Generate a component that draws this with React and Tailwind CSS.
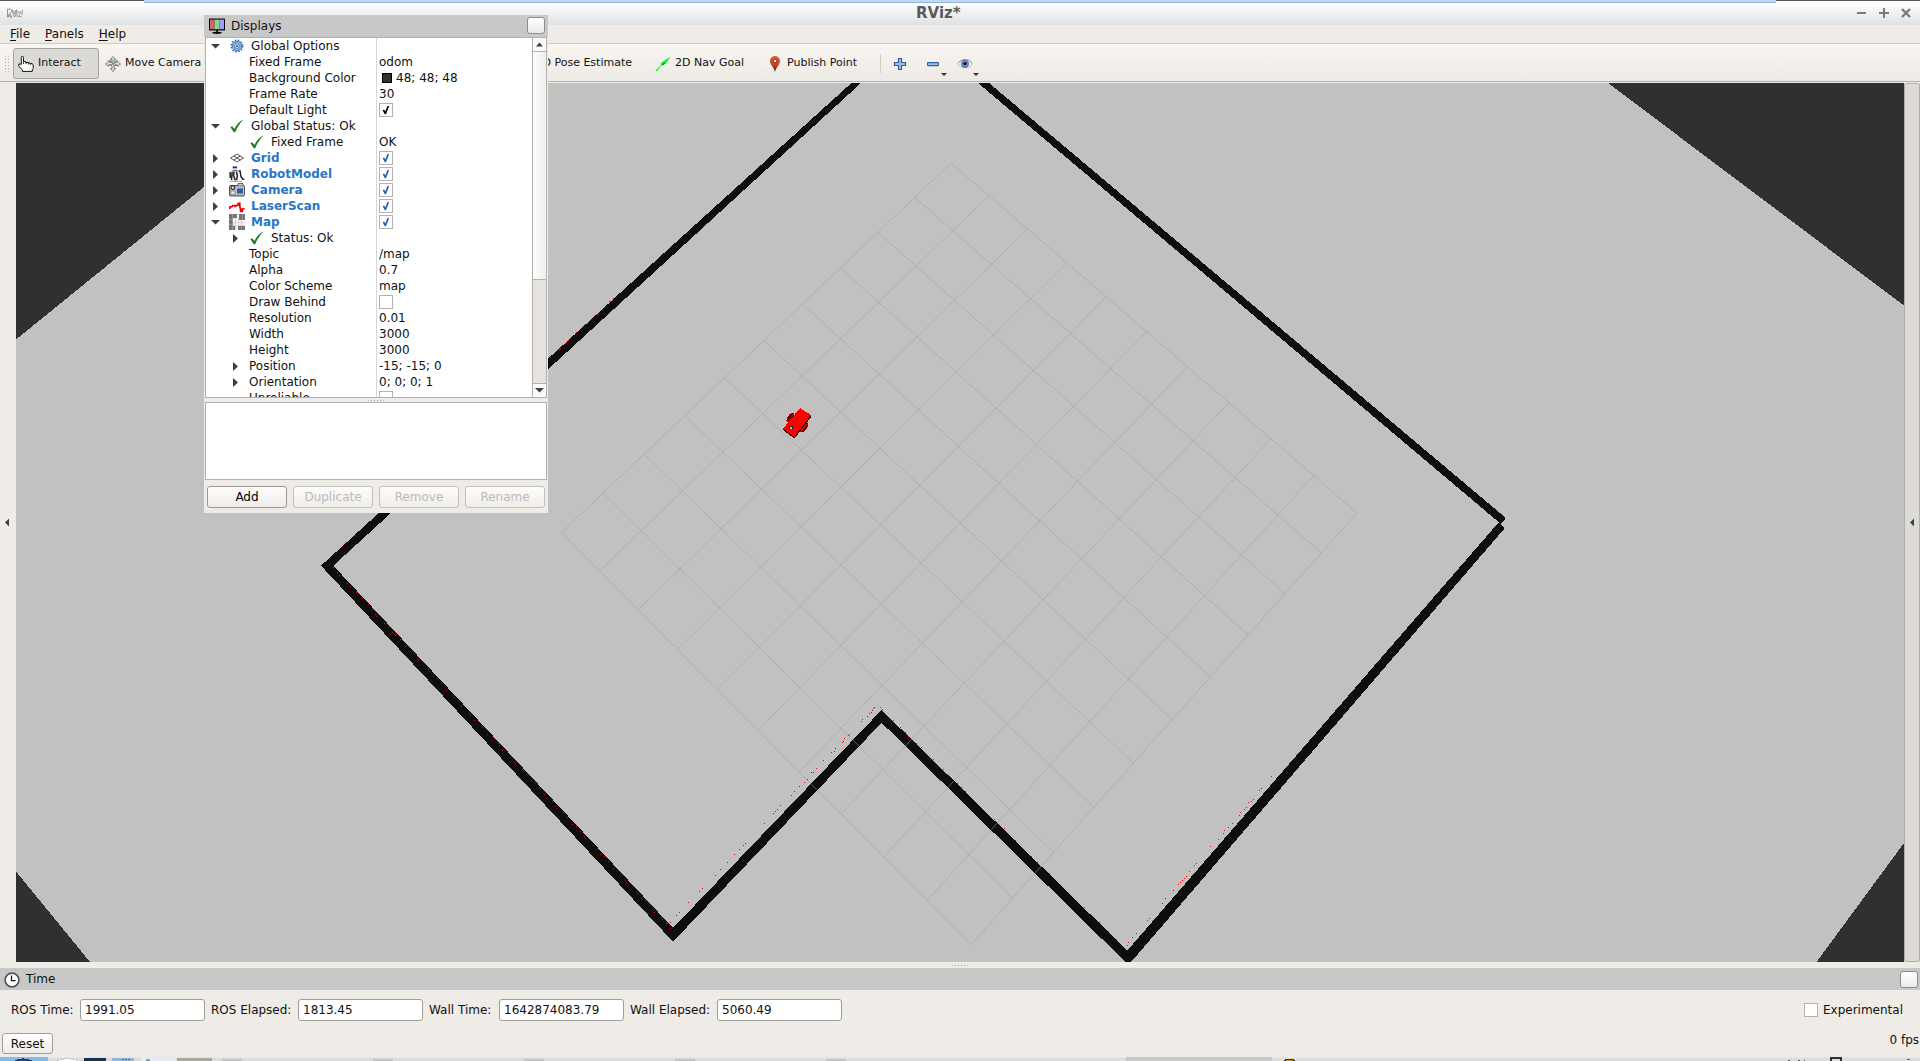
import React from "react";

/* ---------- 3D viewport geometry ---------- */

const GRID_CORNERS = [
  [951, 163],
  [1357, 513],
  [971, 944.7],
  [561.3, 532.7],
];

function project(u, v) {
  const [[x0, y0], [x1, y1], [x2, y2], [x3, y3]] = GRID_CORNERS;
  const dx1 = x1 - x2, dx2 = x3 - x2, sx = x0 - x1 + x2 - x3;
  const dy1 = y1 - y2, dy2 = y3 - y2, sy = y0 - y1 + y2 - y3;
  const den = dx1 * dy2 - dx2 * dy1;
  const g = (sx * dy2 - dx2 * sy) / den;
  const h = (dx1 * sy - sx * dy1) / den;
  const w = g * u + h * v + 1;
  return [
    ((x1 - x0 + g * x1) * u + (x3 - x0 + h * x3) * v + x0) / w,
    ((y1 - y0 + g * y1) * u + (y3 - y0 + h * y3) * v + y0) / w,
  ];
}

const GRID_LINES = Array.from({ length: 11 }, (_, i) => i / 10).flatMap((t) => [
  [project(t, 0), project(t, 1)],
  [project(0, t), project(1, t)],
]);

const HITS_LOWER = [
  [874, 707], [873, 708], [872, 710], [871, 712], [869, 713], [867, 716], [862, 719], [861, 721], [880, 707],
  [849, 734], [848, 735], [844, 738], [843, 741], [842, 742], [835, 748], [834, 751], [831, 752], [823, 760],
  [816, 768], [813, 772], [811, 772], [807, 779], [804, 782], [799, 786], [794, 791], [791, 795], [780, 805],
  [777, 809], [775, 811], [773, 813], [764, 823], [745, 843], [743, 845], [739, 849], [734, 854], [727, 862],
  [720, 869], [715, 875], [702, 888], [699, 891], [688, 902], [679, 912], [676, 915], [670, 922], [667, 923],
  [882, 709], [893, 720], [900, 727], [905, 732], [908, 736], [916, 743], [921, 747], [933, 759], [943, 769],
  [947, 774], [957, 783], [961, 787], [965, 791], [994, 819], [1004, 828], [1015, 840], [1031, 856],
  [1037, 862], [1049, 873], [1084, 907], [1099, 922], [1108, 931], [1116, 939],
];

const HITS_RIGHT = [
  [1271, 776], [1261, 788], [1259, 790], [1253, 799], [1251, 801], [1248, 802], [1246, 807], [1244, 809],
  [1240, 812], [1239, 815], [1232, 823], [1228, 827], [1224, 830], [1223, 833], [1218, 839], [1210, 846],
  [1196, 863], [1194, 865], [1189, 871], [1186, 876], [1184, 878], [1182, 880], [1180, 882], [1178, 884],
  [1173, 890], [1165, 898], [1162, 903], [1149, 918], [1147, 920], [1136, 933], [1132, 937], [1128, 942],
  [1127, 945],
];

const HITS_LEFT = [
  [613, 298], [612, 300], [610, 301], [609, 301], [604, 307], [602, 309], [597, 314], [596, 314], [587, 323],
  [576, 332], [575, 333], [568, 340], [566, 342], [565, 343], [560, 348], [559, 349], [550, 357], [378, 513],
  [371, 520], [354, 535], [342, 546], [329, 558], [329, 564], [333, 567], [337, 572], [339, 575],
  [347, 583], [350, 586], [356, 592], [362, 598],
];

const HITS_WALL = Array.from({ length: 88 }, (_, i) => {
  const y = 604 + i * 3.7 + ((i * 7) % 5) * 0.6;
  const x = 333 + ((y - 565.7) * 339.7) / 362.3;
  return [x - 1 - ((i * 5) % 4) * 0.8, y];
}).filter((_, i) => i % 6 !== 4);

const HITS = [...HITS_LOWER, ...HITS_RIGHT, ...HITS_LEFT, ...HITS_WALL];

function Viewport() {
  return (
    <svg className="block h-[879px] w-[1888px]" viewBox="16 83 1888 879" shapeRendering="crispEdges">
      <rect x="16" y="83" width="1888" height="879" fill="#c1c1c1" />
      <g fill="#303030">
        <polygon points="16,83 330,83 204,187 16,339.5" />
        <polygon points="1608,83 1904,83 1904,305.5" />
        <polygon points="1904,843 1904,962 1816.5,962" />
        <polygon points="16,871.5 90,962 16,962" />
      </g>
      <g fill="#0e0e0e">
        <polygon points="851.4,83 634.3,280 321,565.7 673,941.7 881.6,722.7 1128.5,965 1504.9,528 1500.8,524 1505.9,518 989,83 978,83 1498.8,522.2 1127.3,950.5 881.6,710 673,928 333.3,565.7 645.7,280 861,83" />
      </g>
      <g stroke="rgb(160 160 164 / 0.55)" strokeWidth="1" shapeRendering="auto">
        {GRID_LINES.map(([a, b], i) => (
          <line key={i} x1={a[0]} y1={a[1]} x2={b[0]} y2={b[1]} />
        ))}
      </g>
      <g fill="#ff0000">
        {HITS.map(([x, y], i) => (
          <rect key={i} x={Math.round(x)} y={Math.round(y)} width="1" height="1" />
        ))}
      </g>
      <g>
        <ellipse cx="790.5" cy="417.5" rx="5.5" ry="2.8" transform="rotate(-52 790.5 417.5)" fill="#b40000" />
        <path d="M787 420l6-7M789 421l4-5" stroke="#300" />
        <ellipse cx="803.5" cy="427" rx="6" ry="3.6" transform="rotate(-52 803.5 427)" fill="#5a0000" />
        <path d="M800 432l7-8" stroke="#d00000" strokeWidth="2" />
        <polygon points="800,408 811,415.3 811,417 794.5,438.5 783,430" fill="#200" />
        <polygon points="800,408 811,415 794.3,437 783,428.6" fill="#ff0000" />
        <rect x="789" y="426" width="4" height="3" fill="#222" />
        <rect x="790" y="427" width="2" height="2" fill="#bbb" />
      </g>
    </svg>
  );
}

/* ---------- Icons ---------- */

const svgBase = { width: 16, height: 16, viewBox: "0 0 16 16", className: "block shrink-0" };

const HandIcon = () => (
  <svg {...svgBase}>
    <path
      d="M3.3 8.5V1.4a1 1 0 0 1 2.2 0V5.6h2.2v.8h2.2v.6h2.3v.6h1.8l1.2 1v4l-.9 1.2v1.6H4.4v-1.5L.8 10.4V8h1.4z"
      fill="#fff" stroke="#111" strokeWidth="1"
    />
    <path d="M5.5 5.5v2.5M8 6v2M10.3 6.6V8.5M12.4 7.4V9" stroke="#111" strokeWidth="0.8" />
  </svg>
);

const MoveIcon = () => (
  <svg {...svgBase} fill="#e4e2de" stroke="#555" strokeWidth="0.7">
    <path d="M8 .5L10.6 3.4H9V6.2l1.6 0 0-1.4h2V6l3 2-3 2.2V9h-2V8.6L9 10v2.6h1.6L8 15.5l-2.6-2.9H7V10L5.4 8.7V9h-2v1.2L.5 8l2.9-2v-1.2h2V6.2H7V3.4H5.4z" />
    <path d="M4 6h3.2L9 9.5h3M4.5 9.5L12 6" fill="none" />
  </svg>
);

const NavIcon = () => (
  <svg {...svgBase}>
    <path d="M.3 14.8L6 9l-.5-1.5L8.5 5 15.7.8 11 7.2 8 9.3 6.7 9.2 2 15.3z" fill="#14f52c" />
    <path d="M6.5 8.5l3-2 1 .7-2.5 2z" fill="#0a9a1a" />
  </svg>
);

const PinIcon = () => (
  <svg {...svgBase}>
    <defs>
      <linearGradient id="pin" x1="0" y1="0" x2="0" y2="1">
        <stop offset="0" stopColor="#ef5c38" />
        <stop offset="0.6" stopColor="#b4431f" />
        <stop offset="1" stopColor="#4a1a08" />
      </linearGradient>
    </defs>
    <path d="M8 16C7.2 11.5 3 8.8 3 5a5 5 0 0 1 10 0c0 3.8-4.2 6.5-5 11z" fill="url(#pin)" />
    <circle cx="8" cy="5" r="1.8" fill="#f4e4dc" stroke="#7e2c12" strokeWidth="0.8" />
  </svg>
);

const PlusIcon = () => (
  <svg {...svgBase}>
    <path d="M6.5 2.5h3v4h4v3h-4v4h-3v-4h-4v-3h4z" fill="#9dbde6" stroke="#2f62a8" strokeWidth="1.2" />
  </svg>
);

const MinusIcon = () => (
  <svg {...svgBase}>
    <rect x="2.5" y="6.6" width="11" height="3" rx="0.5" fill="#9dbde6" stroke="#2f62a8" strokeWidth="1.1" />
  </svg>
);

const EyeIcon = () => (
  <svg {...svgBase}>
    <path d="M.5 8C4 2.2 12 2.2 15.5 8 12 13 4 13 .5 8z" fill="#f2f2f2" stroke="#b8b8b8" strokeWidth="1" />
    <path d="M1 7C4.5 2.4 11.5 2.4 15 7" fill="none" stroke="#9a9a9a" strokeWidth="1" />
    <circle cx="8" cy="7.8" r="3.6" fill="#6f8fc9" stroke="#46619b" strokeWidth="0.8" />
    <circle cx="8" cy="7.6" r="1.7" fill="#10142a" />
  </svg>
);

const MonitorIcon = () => (
  <svg {...svgBase}>
    <rect x="0" y="0.5" width="16" height="12" rx="0.5" fill="#0a0a0a" />
    <rect x="1" y="1.6" width="4.6" height="9.6" fill="#c46a6a" />
    <rect x="5.6" y="1.6" width="4.8" height="9.6" fill="#8ad68a" />
    <rect x="10.4" y="1.6" width="4.6" height="9.6" fill="#a0a0f2" />
    <rect x="7" y="12.2" width="2" height="1.6" fill="#0a0a0a" />
    <ellipse cx="8" cy="14.8" rx="4.8" ry="1.1" fill="#0a0a0a" />
  </svg>
);

const GearIcon = () => (
  <svg {...svgBase}>
    <circle cx="8" cy="8" r="5.7" fill="none" stroke="#2f66ae" strokeWidth="1.6" strokeDasharray="1.5 1.5" />
    <circle cx="8" cy="8" r="4.7" fill="#8fb4e2" stroke="#3f77bf" strokeWidth="1" />
    <circle cx="8" cy="8" r="2.4" fill="#c5d9f2" stroke="#3f77bf" strokeWidth="0.8" />
    <circle cx="8" cy="8" r="1" fill="#2f66ae" />
  </svg>
);

const CheckIcon = () => (
  <svg {...svgBase}>
    <path d="M1.4 9.2l1.8-1 2.1 2.8C7.6 6.6 10.4 3.4 14.6 1.2 10.6 5.4 8.4 9 6.2 14.2H4.8z" fill="#1c7c22" />
  </svg>
);

const GridIcon = () => (
  <svg {...svgBase} fill="none" stroke="#444" strokeWidth="0.9">
    <path d="M1.5 8L8 4l6.5 4L8 12zM4.7 6l6.6 4M11.3 6L4.7 10" />
  </svg>
);

const RobotIcon = () => (
  <svg {...svgBase}>
    <path d="M3.5.6h4l.8 1.4-1 1H4.3L3 1.8z" fill="#f0f0f0" stroke="#889" strokeWidth="0.5" />
    <rect x="4" y="0.6" width="4" height="1.6" fill="#1a2fa0" />
    <path d="M1.2 6v6M3.2 5.5L2.6 14M5 5.5l-.4 4 1.8 5M7.4 5.5l1 4.5-.8 4M9.5 5h1.6l.8 5.5 2 2.8h1.4" fill="none" stroke="#222" strokeWidth="1.5" />
    <path d="M3.6 4.6h5" stroke="#555" />
    <path d="M1 15.3h12" stroke="#999" />
  </svg>
);

const CameraIcon = () => (
  <svg {...svgBase}>
    <rect x="0.5" y="3.5" width="15" height="10.5" rx="1" fill="#a9a9a9" stroke="#555" />
    <path d="M9 3.5V1.5h5v2" fill="#ccc" stroke="#666" />
    <circle cx="3.8" cy="5.6" r="1.8" fill="#ddd" stroke="#111" strokeWidth="1" />
    <rect x="7.5" y="6" width="7" height="6" fill="#2b5aa8" stroke="#ddd" strokeWidth="0.8" />
    <rect x="2" y="9" width="4" height="3.4" fill="#e6e6e6" stroke="#777" strokeWidth="0.5" />
  </svg>
);

const LaserIcon = () => (
  <svg {...svgBase}>
    <path d="M.8 11V9l2-.4 1-1h2.4l.4 1.6M6.8 7.6l2.4-.6V5.4h1.6v3l.8 3.4v1.6h1.6v-2.4l2.4-.2" fill="none" stroke="#f00000" strokeWidth="1.7" />
  </svg>
);

const MapIcon = () => (
  <svg {...svgBase} shapeRendering="crispEdges">
    <rect width="16" height="16" fill="#f6f6f6" />
    <path d="M6 4v12M9 4v12M12 6v6M4 8h12M4 11h12" stroke="#d4d4d4" strokeWidth="1" fill="none" />
    <path d="M0 0h8v4H4v8h2v4H0zM10 0h6v6h-6zM9 12h7v4H9z" fill="#757575" />
    <path d="M3 0v16M13 0v6M0 5h4M0 10h4M12 12v4" stroke="#959595" strokeWidth="1" fill="none" />
  </svg>
);

const ClockIcon = () => (
  <svg {...svgBase}>
    <circle cx="8" cy="8" r="6.9" fill="#fff" stroke="#555" strokeWidth="1.7" />
    <path d="M7.5 3.6v5h4" fill="none" stroke="#111" strokeWidth="1.2" />
  </svg>
);

const ICONS = {
  gear: GearIcon,
  check: CheckIcon,
  grid: GridIcon,
  robot: RobotIcon,
  camera: CameraIcon,
  laser: LaserIcon,
  map: MapIcon,
};

function Triangle({ dir }) {
  const d = {
    down: "M0 2h9L4.5 6.6z",
    right: "M2 0v9l5-4.5z",
    up: "M1 6.5h7L4.5 2.5z",
    left: "M6 .5v8L2 4.5z",
  }[dir];
  return (
    <svg width="9" height="9" viewBox="0 0 9 9" className="block shrink-0">
      <path d={d} fill="#3f3f3f" />
    </svg>
  );
}

/* ---------- Displays tree ---------- */

const ROWS = [
  { level: 0, arrow: "down", icon: "gear", name: "Global Options" },
  { level: 1, name: "Fixed Frame", value: "odom" },
  { level: 1, name: "Background Color", value: "48; 48; 48", swatch: true },
  { level: 1, name: "Frame Rate", value: "30" },
  { level: 1, name: "Default Light", check: "black" },
  { level: 0, arrow: "down", icon: "check", name: "Global Status: Ok" },
  { level: 1, icon: "check", name: "Fixed Frame", value: "OK" },
  { level: 0, arrow: "right", icon: "grid", name: "Grid", bold: true, check: "blue" },
  { level: 0, arrow: "right", icon: "robot", name: "RobotModel", bold: true, check: "blue" },
  { level: 0, arrow: "right", icon: "camera", name: "Camera", bold: true, check: "blue" },
  { level: 0, arrow: "right", icon: "laser", name: "LaserScan", bold: true, check: "blue" },
  { level: 0, arrow: "down", icon: "map", name: "Map", bold: true, check: "blue" },
  { level: 1, arrow: "right", icon: "check", name: "Status: Ok" },
  { level: 1, name: "Topic", value: "/map" },
  { level: 1, name: "Alpha", value: "0.7" },
  { level: 1, name: "Color Scheme", value: "map" },
  { level: 1, name: "Draw Behind", check: "none" },
  { level: 1, name: "Resolution", value: "0.01" },
  { level: 1, name: "Width", value: "3000" },
  { level: 1, name: "Height", value: "3000" },
  { level: 1, arrow: "right", name: "Position", value: "-15; -15; 0" },
  { level: 1, arrow: "right", name: "Orientation", value: "0; 0; 0; 1" },
  { level: 1, name: "Unreliable", check: "none" },
];

function CheckBox({ state }) {
  return (
    <span className="flex h-3.5 w-3.5 shrink-0 items-center justify-center border border-[#b4b1ae] bg-white">
      {state !== "none" && (
        <svg width="10" height="10" viewBox="0 0 10 10">
          <path
            d="M1.6 5.2l1.6-.6 1 1.8L6.4 1.2 8.3.8 5 9.2H3.8z"
            fill={state === "blue" ? "#1f5fa6" : "#000"}
          />
        </svg>
      )}
    </span>
  );
}

function TreeRow({ row }) {
  const Icon = row.icon && ICONS[row.icon];
  return (
    <div className="flex h-4 shrink-0 leading-4">
      <div className={`flex w-[171px] shrink-0 items-center border-r border-[#d6d6d6] ${row.level === 1 ? "pl-[25px]" : "pl-[5px]"}`}>
        <span className="w-[18px] shrink-0">{row.arrow && <Triangle dir={row.arrow} />}</span>
        {Icon && (
          <span className="mr-1.5 shrink-0">
            <Icon />
          </span>
        )}
        <span className={row.bold ? "font-bold text-[#2a76c6]" : ""}>{row.name}</span>
      </div>
      <div className="flex items-center pl-0.5">
        {row.swatch && <span className="mr-1 ml-[3px] h-2.5 w-2.5 border border-black bg-[#303030]" />}
        {row.check && <CheckBox state={row.check} />}
        {row.value}
      </div>
    </div>
  );
}

function Dots() {
  return (
    <div className="flex gap-0.5">
      {[0, 1, 2, 3, 4, 5].map((i) => (
        <span key={i} className="h-px w-px bg-[#a9a5a1]" />
      ))}
    </div>
  );
}

function FloatButton() {
  return (
    <span className="h-[17px] w-[18px] rounded-[3px] border border-[#8f8c89] bg-linear-to-b from-white to-[#ebebe9]" />
  );
}

function DisplaysPanel() {
  return (
    <section className="absolute top-[15px] left-[204px] flex h-[498px] w-[344px] flex-col bg-[#efebe7] px-px">
      <div className="-mx-px flex h-[22px] shrink-0 items-center bg-[#c8c8c8] pr-[3px] pb-px pl-[5px]">
        <MonitorIcon />
        <span className="ml-1.5 flex-1">Displays</span>
        <FloatButton />
      </div>
      <div className="flex h-[361px] shrink-0 border border-[#b3afab] bg-white">
        <div className="flex flex-1 flex-col overflow-hidden">
          {ROWS.map((row, i) => (
            <TreeRow key={i} row={row} />
          ))}
        </div>
        <div className="flex w-3.5 flex-col border-l border-[#b3afab] bg-[#e6e2df]">
          <div className="flex h-3.5 items-center justify-center border-b border-[#b3afab] bg-[#fafafa]">
            <Triangle dir="up" />
          </div>
          <div className="h-[228px] border-b border-[#b3afab] bg-linear-to-r from-white to-[#f0eeeb]" />
          <div className="flex-1" />
          <div className="flex h-3.5 items-center justify-center border-t border-[#b3afab] bg-[#fafafa]">
            <Triangle dir="down" />
          </div>
        </div>
      </div>
      <div className="flex h-1 shrink-0 items-center justify-center">
        <Dots />
      </div>
      <div className="h-[78px] shrink-0 border border-[#b3afab] bg-white" />
      <div className="mt-1.5 flex gap-1.5 px-0.5">
        {["Add", "Duplicate", "Remove", "Rename"].map((label, i) => (
          <button
            key={label}
            className={`h-[22px] w-20 rounded-[3px] border bg-linear-to-b from-[#fdfdfd] to-[#efedea] leading-5 ${
              i === 0 ? "border-[#9c9894] text-black" : "border-[#c4c1bd] text-[#bdbab7]"
            }`}
          >
            {label}
          </button>
        ))}
      </div>
    </section>
  );
}

/* ---------- Window chrome ---------- */

function WindowHeader() {
  return (
    <header className="shrink-0">
      <div className="flex h-[3px]">
        <div className="w-36 border-t border-[#555] bg-white" />
        <div className="w-[1632px] border-b border-[#8fb6e2] bg-[#c2d8f0]" />
        <div className="flex-1 border-t border-[#555] bg-white" />
      </div>
      <div className="flex h-[22px] items-center bg-linear-to-b from-white to-[#dfe2e2] pb-0.5">
        <svg width="18" height="10" viewBox="0 0 18 10" className="ml-1.5">
          <g fill="none" stroke="#8c8c8c" strokeWidth="0.9">
            <path d="M1.5 9V1.2h3q1.6.2 1.4 2T3.5 5.2L6 9.2H4.2L2.8 6v3z" />
            <path d="M6 1.5l2 7h1.2l1.6-7M7.5 3l1 3 1-4M11 3v6M12.2 4h2.5L12.6 8.6h3M16.5 2l-.7 5" />
          </g>
        </svg>
        <h1 className="ml-[892px] flex-1 text-[15px] leading-5 font-bold text-[#5a5a5a]">RViz*</h1>
        <svg width="54" height="12" viewBox="0 0 54 12" className="mr-[9px]" stroke="#7b7b7b" strokeWidth="2">
          <path d="M0 6h9M22 6h10M27 1v10" />
          <path d="M45 2l8 8M53 2l-8 8" strokeWidth="2.4" />
        </svg>
      </div>
    </header>
  );
}

function MenuBar() {
  return (
    <nav className="flex h-[19px] shrink-0 gap-[15px] border-b border-[#cfccc8] pl-2.5 leading-[18px]">
      {["File", "Panels", "Help"].map((m) => (
        <span key={m}>
          <u className="underline-offset-2">{m[0]}</u>
          {m.slice(1)}
        </span>
      ))}
    </nav>
  );
}

function DropTick() {
  return (
    <svg width="6" height="3" viewBox="0 0 6 3" className="mt-[22px] block">
      <path d="M0 0h6L3 3z" fill="#333" />
    </svg>
  );
}

function ToolBar() {
  return (
    <div className="flex h-[38px] shrink-0 items-center border-b border-[#b4b0a8] bg-linear-to-b from-[#f9f6f2] to-[#edeae5] pt-0.5 text-[11px]">
      <div className="ml-[5px] grid grid-cols-2 gap-0.5">
        {Array.from({ length: 12 }, (_, i) => (
          <span key={i} className="h-px w-px bg-[#b5b1ac]" />
        ))}
      </div>
      <div className="ml-1 flex h-[31px] w-[86px] items-center rounded-[3px] border border-[#a8a5a1] bg-[#dcdad6] pl-1">
        <HandIcon />
        <span className="ml-1">Interact</span>
      </div>
      <div className="ml-1.5 flex w-[527px] items-center">
        <MoveIcon />
        <span className="ml-1 flex-1">Move Camera</span>
        <span>2D Pose Estimate</span>
      </div>
      <div className="ml-[23px] flex w-28 items-center gap-1 whitespace-nowrap">
        <NavIcon />
        2D Nav Goal
      </div>
      <div className="flex items-center gap-1">
        <PinIcon />
        Publish Point
      </div>
      <div className="ml-[23px] h-[19px] w-px bg-[#cfccc8]" />
      <div className="ml-[11px]">
        <PlusIcon />
      </div>
      <div className="ml-[17px]">
        <MinusIcon />
      </div>
      <DropTick />
      <div className="ml-2.5">
        <EyeIcon />
      </div>
      <DropTick />
    </div>
  );
}

/* ---------- Time panel and desktop edge ---------- */

const TIMES = [
  ["ROS Time:", "1991.05", "w-[69px]"],
  ["ROS Elapsed:", "1813.45", "w-[87px]"],
  ["Wall Time:", "1642874083.79", "w-[70px]"],
  ["Wall Elapsed:", "5060.49", "w-[87px]"],
];

function TimePanel() {
  return (
    <section className="flex h-[89px] shrink-0 flex-col">
      <div className="flex h-[22px] items-center bg-[#c8c8c8] pt-px pr-0.5 pl-1">
        <ClockIcon />
        <span className="ml-1.5 flex-1 pb-px">Time</span>
        <FloatButton />
      </div>
      <div className="mt-[9px] flex h-[22px] items-center pl-[11px]">
        {TIMES.map(([label, value, width]) => (
          <div key={label} className="mr-1.5 flex items-center">
            <span className={`${width} whitespace-nowrap`}>{label}</span>
            <span className="h-[22px] w-[125px] rounded-[3px] border border-[#a19d99] bg-white pl-1 leading-5">{value}</span>
          </div>
        ))}
        <span className="flex-1" />
        <CheckBox state="none" />
        <span className="mr-[17px] ml-[5px]">Experimental</span>
      </div>
      <div className="mt-3 flex justify-between pr-px pl-0.5">
        <button className="h-[21px] w-[51px] rounded-[3px] border border-[#a19d99] bg-linear-to-b from-white to-[#efedea] pt-px leading-[19px]">
          Reset
        </button>
        <span className="leading-[15px]">0 fps</span>
      </div>
    </section>
  );
}

function Taskbar() {
  return (
    <svg className="block h-1 w-full shrink-0" viewBox="0 1057 1920 4" shapeRendering="crispEdges">
      <rect y="1057" width="1920" height="4" fill="#dcdcdc" />
      <rect y="1057" width="1920" height="1" fill="#e6e6e6" />
      <rect y="1057" width="48" height="4" fill="#7fbcf2" />
      <path d="M15 1061q8-4 17 0z" fill="#fff" stroke="#1f3f70" strokeWidth="1.2" />
      <path d="M57 1061l3-2h4l1-1h5l1 1h4l2 2z" fill="#fff" stroke="#aaa" strokeWidth="0.6" />
      <rect x="84" y="1058" width="22" height="3" fill="#16304f" />
      <rect x="112" y="1058" width="22" height="3" fill="#8fb8de" />
      <path d="M122 1059.5h9" stroke="#456f9e" strokeDasharray="2 1" />
      <rect x="141" y="1058" width="35" height="3" fill="#e4eef6" />
      <rect x="146" y="1059" width="4" height="2" fill="#7fa3c6" />
      <rect x="177" y="1058" width="35" height="3" fill="#aba7a0" />
      {[222, 373, 524, 675, 826].map((x) => (
        <rect key={x} x={x} y="1059" width="20" height="2" fill="#c3c3c3" />
      ))}
      <rect x="1126" y="1057" width="146" height="4" fill="#c6c8c6" />
      <path d="M1284 1061l3-2h5l3 2z" fill="#e08020" stroke="#333" />
      <path d="M1788 1060h2M1798 1060h2M1804 1060h1M1907 1059.5h3" stroke="#555" />
      <path d="M1831 1061v-3h10v3" fill="none" stroke="#333" strokeWidth="2" />
    </svg>
  );
}

export default function App() {
  return (
    <div className="relative flex h-[1061px] w-[1920px] flex-col overflow-hidden bg-[#efebe6] font-['DejaVu_Sans',sans-serif] text-[12px] text-[#111]">
      <WindowHeader />
      <MenuBar />
      <ToolBar />
      <main className="mt-px flex h-[879px] shrink-0">
        <div className="flex w-4 items-center justify-center pr-px">
          <Triangle dir="left" />
        </div>
        <Viewport />
        <div className="flex w-4 items-center justify-center rounded-[2px] border border-[#b0adaa] bg-[#dcdbd7]">
          <Triangle dir="left" />
        </div>
      </main>
      <div className="flex h-1.5 shrink-0 items-center justify-center">
        <Dots />
      </div>
      <TimePanel />
      <Taskbar />
      <DisplaysPanel />
    </div>
  );
}
